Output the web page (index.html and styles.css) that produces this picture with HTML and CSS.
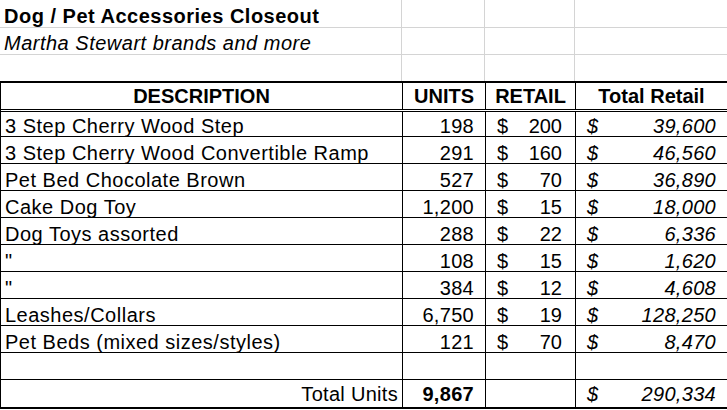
FILE: index.html
```html
<!DOCTYPE html>
<html>
<head>
<meta charset="utf-8">
<link rel="stylesheet" href="styles.css">
</head>
<body>
<div class="sheet">
  <div class="row r-title">
    <div class="c desc title">Dog / Pet Accessories Closeout</div><div class="c"></div><div class="c"></div><div class="c"></div>
  </div>
  <div class="row r-sub">
    <div class="c desc sub">Martha Stewart brands and more</div><div class="c"></div><div class="c"></div><div class="c"></div>
  </div>
  <div class="row r-blank">
    <div class="c"></div><div class="c"></div><div class="c"></div><div class="c"></div>
  </div>
  <div class="row r-head">
    <div class="c hd">DESCRIPTION</div><div class="c hd">UNITS</div><div class="c hd">RETAIL</div><div class="c hd">Total Retail</div>
  </div>
  <div class="row r-data first">
    <div class="c desc">3 Step Cherry Wood Step</div><div class="c num">198</div><div class="c money"><span>$</span><span>200</span></div><div class="c money tot"><span>$</span><span>39,600</span></div>
  </div>
  <div class="row r-data">
    <div class="c desc">3 Step Cherry Wood Convertible Ramp</div><div class="c num">291</div><div class="c money"><span>$</span><span>160</span></div><div class="c money tot"><span>$</span><span>46,560</span></div>
  </div>
  <div class="row r-data">
    <div class="c desc">Pet Bed Chocolate Brown</div><div class="c num">527</div><div class="c money"><span>$</span><span>70</span></div><div class="c money tot"><span>$</span><span>36,890</span></div>
  </div>
  <div class="row r-data">
    <div class="c desc">Cake Dog Toy</div><div class="c num">1,200</div><div class="c money"><span>$</span><span>15</span></div><div class="c money tot"><span>$</span><span>18,000</span></div>
  </div>
  <div class="row r-data">
    <div class="c desc">Dog Toys assorted</div><div class="c num">288</div><div class="c money"><span>$</span><span>22</span></div><div class="c money tot"><span>$</span><span>6,336</span></div>
  </div>
  <div class="row r-data">
    <div class="c desc">"</div><div class="c num">108</div><div class="c money"><span>$</span><span>15</span></div><div class="c money tot"><span>$</span><span>1,620</span></div>
  </div>
  <div class="row r-data">
    <div class="c desc">"</div><div class="c num">384</div><div class="c money"><span>$</span><span>12</span></div><div class="c money tot"><span>$</span><span>4,608</span></div>
  </div>
  <div class="row r-data">
    <div class="c desc">Leashes/Collars</div><div class="c num">6,750</div><div class="c money"><span>$</span><span>19</span></div><div class="c money tot"><span>$</span><span>128,250</span></div>
  </div>
  <div class="row r-data">
    <div class="c desc">Pet Beds (mixed sizes/styles)</div><div class="c num">121</div><div class="c money"><span>$</span><span>70</span></div><div class="c money tot"><span>$</span><span>8,470</span></div>
  </div>
  <div class="row r-data">
    <div class="c desc"></div><div class="c num"></div><div class="c money"></div><div class="c money tot"></div>
  </div>
  <div class="row r-total">
    <div class="c label">Total Units</div><div class="c num bold">9,867</div><div class="c money"></div><div class="c money tot"><span>$</span><span>290,334</span></div>
  </div>
</div>
</body>
</html>
```
FILE: styles.css
```css
* { box-sizing: border-box; }
html, body { margin: 0; padding: 0; background: #fff; }
body {
  font-family: "Liberation Sans", Arial, sans-serif;
  font-size: 20px;
  color: #000;
}
.sheet { width: 727px; }
.row {
  display: grid;
  grid-template-columns: 402px 83px 90px 152px;
}
.c {
  display: flex;
  align-items: flex-end;
  line-height: 20px;
  padding-bottom: 0;
  white-space: nowrap;
  overflow: visible;
  border-right: 1px solid #000;
  min-width: 0;
}
.r-title .c, .r-sub .c, .r-blank .c { border-right-color: #d4d4d4; }
.r-title .c:last-child, .r-sub .c:last-child, .r-blank .c:last-child { border-right-color: transparent; }
.r-title { height: 28px; border-bottom: 1px solid #d4d4d4; }
.r-sub { height: 27px; border-bottom: 1px solid #d4d4d4; }
.r-blank { height: 28px; border-bottom: 2px solid #000; }
.r-head { height: 29px; border-bottom: 3px double #000; border-left: 1px solid #000; }
.r-head .c { padding-bottom: 3px; }
.r-data { height: 27px; border-bottom: 1px solid #000; border-left: 1px solid #000; }
.r-data.first { height: 25px; }
.r-total { height: 29px; border-bottom: 2px solid #000; border-left: 1px solid #000; }
.r-total .c { padding-bottom: 3px; }

.title { font-weight: bold; padding-left: 5px; padding-bottom: 1px; letter-spacing: 0.58px; }
.sub { font-style: italic; padding-left: 5px; padding-bottom: 1px; letter-spacing: 0.45px; }
.desc { padding-left: 4px; letter-spacing: 0.5px; }
.hd { justify-content: center; font-weight: bold; }
.num { justify-content: flex-end; padding-right: 11px; letter-spacing: 0.3px; }
.bold { font-weight: bold; }
.money { justify-content: space-between; padding-left: 11px; padding-right: 13px; }
.money.tot { font-style: italic; padding-right: 11px; letter-spacing: 0.3px; }
.label { justify-content: flex-end; padding-right: 4px; letter-spacing: 0.3px; }
```
